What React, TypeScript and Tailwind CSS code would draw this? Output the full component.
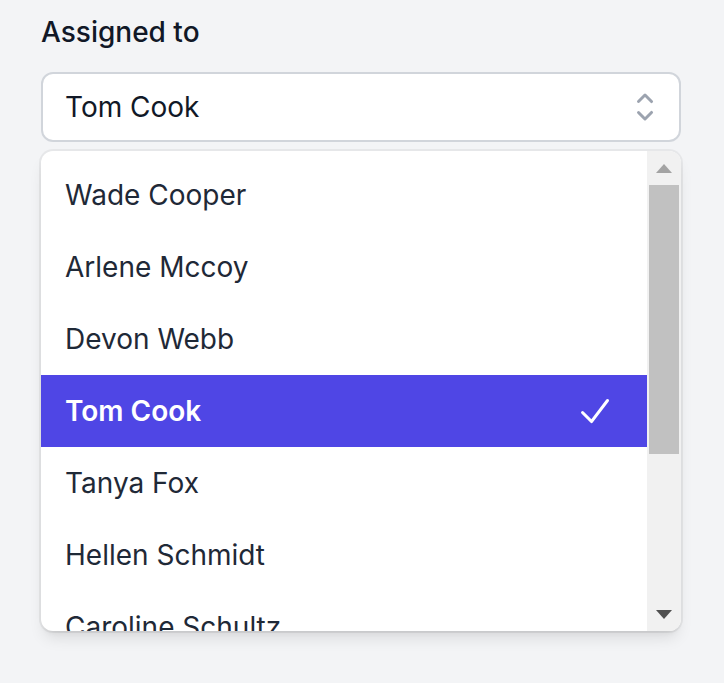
import React from 'react';

const people = [
  'Wade Cooper',
  'Arlene Mccoy',
  'Devon Webb',
  'Tom Cook',
  'Tanya Fox',
  'Hellen Schmidt',
  'Caroline Schultz',
];

const ChevronUpDown = () => (
  <svg viewBox="0 0 20 20" fill="currentColor" className="w-[40px] h-[40px] text-[#9ca3af]">
    <path
      fillRule="evenodd"
      clipRule="evenodd"
      d="M10.53 3.47a.75.75 0 0 0-1.06 0L6.22 6.72a.75.75 0 0 0 1.06 1.06L10 5.06l2.72 2.72a.75.75 0 1 0 1.06-1.06l-3.25-3.25Zm-4.31 9.81 3.25 3.25a.75.75 0 0 0 1.06 0l3.25-3.25a.75.75 0 1 0-1.06-1.06L10 14.94l-2.72-2.72a.75.75 0 0 0-1.06 1.06Z"
    />
  </svg>
);

const Check = () => (
  <svg viewBox="0 0 20 20" fill="currentColor" className="w-[40px] h-[40px]">
    <path
      fillRule="evenodd"
      clipRule="evenodd"
      d="M16.704 4.153a.75.75 0 0 1 .143 1.052l-8 10.5a.75.75 0 0 1-1.127.075l-4.5-4.5a.75.75 0 0 1 1.06-1.06l3.894 3.893 7.48-9.817a.75.75 0 0 1 1.05-.143Z"
    />
  </svg>
);

export default function App() {
  const selected = 'Tom Cook';

  return (
    <div className="w-full h-[683px] bg-[#f3f4f6] font-['Inter',sans-serif] text-[#111827]">
      <div className="ml-[41px] w-[640px] pt-[8px]">
        {/* Label */}
        <label className="block text-[28px] leading-[48px] font-medium">Assigned to</label>

        {/* Select button */}
        <button className="mt-4 flex w-full h-[70px] items-center justify-between rounded-xl border-2 border-[#d1d5db] bg-white pl-[22px] pr-[14px] text-left">
          <span className="text-[28px] leading-[40px]">{selected}</span>
          <ChevronUpDown />
        </button>

        {/* Options */}
        <div className="mt-[9px] flex h-[480px] overflow-hidden rounded-xl bg-white shadow-lg ring-2 ring-black/5">
          <ul className="flex-1 overflow-hidden py-2">
            {people.map((name) => {
              const isSelected = name === selected;
              return (
                <li
                  key={name}
                  className={`relative py-4 pl-6 pr-[72px] text-[28px] leading-[40px] ${
                    isSelected ? 'bg-[#4f46e5] text-white font-semibold' : 'text-[#1f2937]'
                  }`}
                >
                  <span className="block truncate">{name}</span>
                  {isSelected && (
                    <span className="absolute inset-y-0 right-[32px] flex items-center text-white">
                      <Check />
                    </span>
                  )}
                </li>
              );
            })}
          </ul>

          {/* Scrollbar */}
          <div className="flex w-[34px] flex-col bg-[#f1f1f1]">
            <div className="flex h-[34px] items-center justify-center">
              <div className="h-0 w-0 border-x-[8px] border-b-[9px] border-x-transparent border-b-[#a3a3a3]" />
            </div>
            <div className="mx-[2px] h-[269px] bg-[#c1c1c1]" />
            <div className="flex-1" />
            <div className="flex h-[34px] items-center justify-center">
              <div className="h-0 w-0 border-x-[8px] border-t-[9px] border-x-transparent border-t-[#505050]" />
            </div>
          </div>
        </div>
      </div>
    </div>
  );
}
